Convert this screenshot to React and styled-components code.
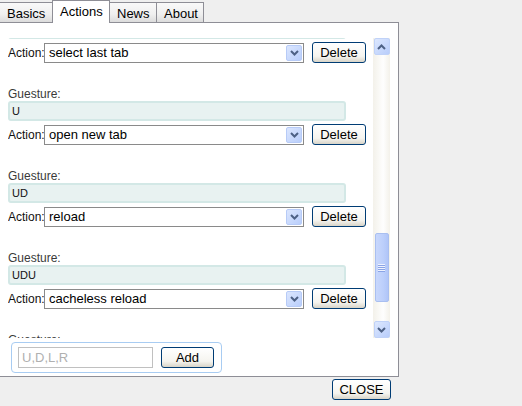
import React, { useLayoutEffect, useRef } from "react";
import styled, { createGlobalStyle } from "styled-components";

const GlobalStyle = createGlobalStyle`
  html, body {
    margin: 0;
    padding: 0;
    background: #efefef;
    font-family: "Liberation Sans", Arial, sans-serif;
  }
`;

const Window = styled.div`
  width: 399px;
  display: flex;
  flex-direction: column;
`;

const TabBar = styled.div`
  display: flex;
  align-items: flex-end;
  height: 23px;
  margin-bottom: -1px;
  position: relative;
  z-index: 1;
`;

const Tab = styled.div`
  box-sizing: border-box;
  height: ${(p) => (p.active ? "23px" : "21px")};
  width: ${(p) => p.w}px;
  border: 1px solid #8e8e96;
  border-bottom: ${(p) => (p.active ? "none" : "1px solid #8e8e96")};
  border-left: ${(p) => (p.first ? "none" : "1px solid #8e8e96")};
  margin-left: ${(p) => (p.first ? "0" : "-1px")};
  background: ${(p) =>
    p.active ? "#fff" : "linear-gradient(#f9f9f9, #efefef 60%, #dcdcdc)"};
  font-size: 13px;
  color: #000;
  padding: ${(p) => (p.active ? "3px 0 0 7px" : "3px 0 0 7px")};
  line-height: 15px;
`;

const Panel = styled.div`
  box-sizing: border-box;
  height: 355px;
  background: #fff;
  border: 1px solid #8e8e96;
  border-left: none;
  padding: 15px 8px 0 8px;
  display: flex;
  flex-direction: column;
`;

const ScrollArea = styled.div`
  display: flex;
  height: 300px;
`;

const Viewport = styled.div`
  flex: 1;
  overflow: hidden;
`;

const Item = styled.div`
  height: 82px;
  box-sizing: border-box;
`;

const GLabel = styled.div`
  height: 14px;
  font-size: 12px;
  line-height: 14px;
  color: #3a3a3a;
`;

const GInput = styled.div`
  box-sizing: border-box;
  width: 338px;
  height: 20px;
  border: 2px solid #d3e8e6;
  border-radius: 3px;
  background: #e8f2f1;
  font-size: 11px;
  line-height: 16px;
  padding-left: 2px;
  color: #111;
`;

const ActionRow = styled.div`
  display: flex;
  align-items: center;
  height: 21px;
  margin-top: 3px;
`;

const ALabel = styled.span`
  font-size: 12px;
  color: #111;
  width: 36px;
`;

const Select = styled.div`
  box-sizing: border-box;
  width: 260px;
  height: 20px;
  border: 1px solid #8a8a8a;
  display: flex;
  align-items: center;
  justify-content: space-between;
  padding: 0 1px 0 4px;
  font-size: 13px;
  color: #000;
`;

const DropBtn = styled.span`
  box-sizing: border-box;
  width: 16px;
  height: 16px;
  border: 1px solid #b7cbf7;
  border-radius: 2px;
  background: linear-gradient(135deg, #dbe6fe, #b9cefb);
  display: flex;
  align-items: center;
  justify-content: center;
`;

const XPButton = styled.button`
  box-sizing: border-box;
  width: ${(p) => p.w}px;
  height: 21px;
  margin-left: ${(p) => p.ml || 0}px;
  border: 1px solid #003c74;
  border-radius: 3px;
  background: linear-gradient(#ffffff, #f5f4ef 70%, #d8d4c8);
  font-family: "Liberation Sans", Arial, sans-serif;
  font-size: 13px;
  color: #000;
  padding: 0;
`;

const ScrollBar = styled.div`
  width: 17px;
  display: flex;
  flex-direction: column;
  align-items: center;
  background: linear-gradient(90deg, #f3f1ea, #fefefe 60%, #f3f1ea);
`;

const Arrow = styled.div`
  box-sizing: border-box;
  width: 16px;
  height: 17px;
  border: 1px solid #c0d2f8;
  border-radius: 2px;
  background: linear-gradient(135deg, #dde8fe, #b8cdfb);
  display: flex;
  align-items: center;
  justify-content: center;
`;

const Thumb = styled.div`
  box-sizing: border-box;
  width: 14px;
  height: 69px;
  margin-top: ${(p) => p.top}px;
  border: 1px solid #a9bff0;
  border-radius: 2px;
  background: linear-gradient(90deg, #c8d7fc, #bccffb 60%, #b0c5f8);
  display: flex;
  flex-direction: column;
  align-items: center;
  justify-content: center;
  gap: 1px;
`;

const Grip = styled.span`
  width: 7px;
  height: 1px;
  background: #eef2fe;
  box-shadow: 0 1px 0 #8aa4e6;
`;

const Spacer = styled.div`
  flex: 1;
`;

const AddBox = styled.div`
  box-sizing: border-box;
  width: 211px;
  height: 31px;
  margin: 4px 0 0 3px;
  border: 1px solid #a8ccf2;
  border-radius: 4px;
  display: flex;
  align-items: center;
  padding-left: 6px;
`;

const AddInput = styled.input`
  box-sizing: border-box;
  width: 135px;
  height: 21px;
  border: 1px solid #c0c0c0;
  font-family: "Liberation Sans", Arial, sans-serif;
  font-size: 13px;
  padding: 0 3px;
  outline: none;
  &::placeholder {
    color: #b0b0b0;
  }
`;

const Footer = styled.div`
  display: flex;
  justify-content: flex-end;
  padding: 2px 8px 0 0;
`;

const Chevron = ({ up }) => (
  <svg width="9" height="6" viewBox="0 0 9 6">
    <path
      d={up ? "M1 5 L4.5 1.5 L8 5" : "M1 1 L4.5 4.5 L8 1"}
      fill="none"
      stroke="#4d6185"
      strokeWidth="2"
    />
  </svg>
);

const items = [
  ["L", "go back"],
  ["R", "go forward"],
  ["DR", "close tab"],
  ["RL", "select last tab"],
  ["U", "open new tab"],
  ["UD", "reload"],
  ["UDU", "cacheless reload"],
  ["DU", "stop"],
];

export default function App() {
  const vp = useRef(null);
  useLayoutEffect(() => {
    if (vp.current) vp.current.scrollTop = 3 * 82 + 33;
  }, []);
  return (
    <>
      <GlobalStyle />
      <Window>
        <TabBar>
          <Tab first w={53}>Basics</Tab>
          <Tab active w={58}>Actions</Tab>
          <Tab w={48}>News</Tab>
          <Tab w={48}>About</Tab>
        </TabBar>
        <Panel>
          <ScrollArea>
            <Viewport ref={vp}>
              {items.map(([g, a]) => (
                <Item key={g}>
                  <GLabel>Guesture:</GLabel>
                  <GInput>{g}</GInput>
                  <ActionRow>
                    <ALabel>Action:</ALabel>
                    <Select>
                      {a}
                      <DropBtn>
                        <Chevron />
                      </DropBtn>
                    </Select>
                    <XPButton w={54} ml={8}>Delete</XPButton>
                  </ActionRow>
                </Item>
              ))}
            </Viewport>
            <ScrollBar>
              <Arrow>
                <Chevron up />
              </Arrow>
              <Thumb top={178}>
                <Grip />
                <Grip />
                <Grip />
                <Grip />
              </Thumb>
              <Spacer />
              <Arrow>
                <Chevron />
              </Arrow>
            </ScrollBar>
          </ScrollArea>
          <AddBox>
            <AddInput placeholder="U,D,L,R" />
            <XPButton w={53} ml={8}>Add</XPButton>
          </AddBox>
        </Panel>
        <Footer>
          <XPButton w={59}>CLOSE</XPButton>
        </Footer>
      </Window>
    </>
  );
}
